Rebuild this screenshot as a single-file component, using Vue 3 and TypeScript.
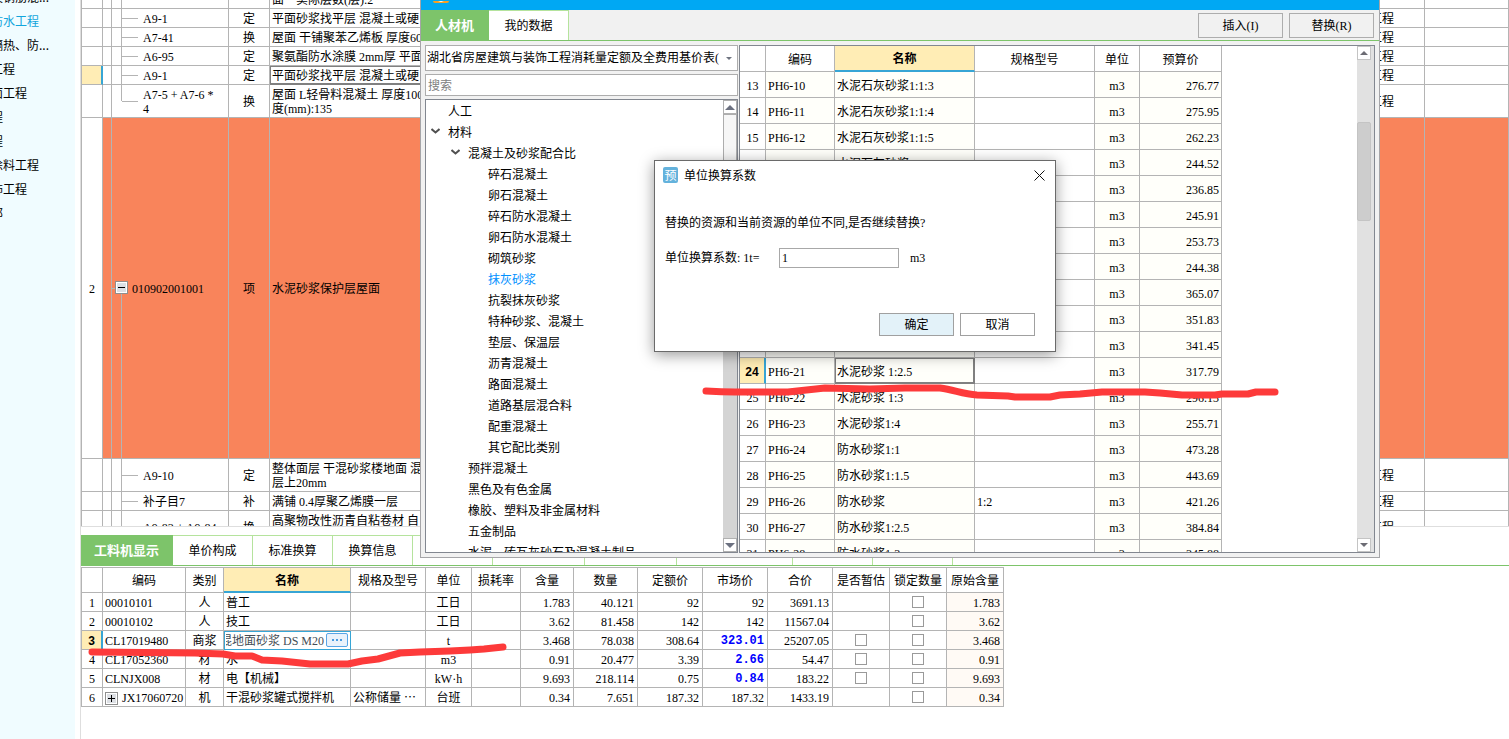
<script setup lang="ts">
import { ref } from 'vue'

interface NavItem { text: string; active?: boolean }
const navItems: NavItem[] = [
  { text: '混凝土及钢筋混...' },
  { text: '屋面及防水工程', active: true },
  { text: '保温、隔热、防...' },
  { text: '楼地面工程' },
  { text: '墙、柱面工程' },
  { text: '天棚工程' },
  { text: '门窗工程' },
  { text: '油漆、涂料工程' },
  { text: '其他装饰工程' },
  { text: '其他分部' },
]

interface QuotaRow {
  no?: string
  code: string[]
  kind: string
  name: string[]
  tall?: boolean
  item?: boolean
  last?: boolean
  selected?: boolean
}
const quotaRows: QuotaRow[] = [
  { code: [''], kind: '', name: ['\u00a0', '面\u3000实际层数(层):2'], tall: true },
  { code: ['A9-1'], kind: '定', name: ['平面砂浆找平层 混凝土或硬'] },
  { code: ['A7-41'], kind: '换', name: ['屋面 干铺聚苯乙烯板 厚度60'] },
  { code: ['A6-95'], kind: '定', name: ['聚氨酯防水涂膜 2mm厚 平面'] },
  { code: ['A9-1'], kind: '定', name: ['平面砂浆找平层 混凝土或硬'], selected: true },
  { code: ['A7-5 + A7-6 *', '4'], kind: '换', name: ['屋面 L轻骨料混凝土 厚度100', '度(mm):135'], tall: true, last: true },
  { no: '2', code: ['010902001001'], kind: '项', name: ['水泥砂浆保护层屋面'], item: true },
  { code: ['A9-10'], kind: '定', name: ['整体面层 干混砂浆楼地面 混', '层上20mm'], tall: true },
  { code: ['补子目7'], kind: '补', name: ['满铺 0.4厚聚乙烯膜一层'] },
  { code: ['A9-83 + A9-84'], kind: '换', name: ['高聚物改性沥青自粘卷材 自', '\u00a0'], tall: true },
]

const bottomTabs = [
  { text: '工料机显示', size: 'w92' },
  { text: '单价构成', size: 'w80' },
  { text: '标准换算', size: 'w80' },
  { text: '换算信息', size: 'w80' },
  { text: '', size: 'w80' },
  { text: '', size: 'w92' },
  { text: '', size: 'w92' },
  { text: '', size: 'w116' },
  { text: '', size: 'w80' },
  { text: '', size: 'w80' },
]
const activeTab = ref(0)

interface ResourceRow {
  code: string; kind: string; name: string; spec: string; unit: string
  amount: string; qty: string; quota: string; market: string; total: string
  estimate: boolean; changed?: boolean; editing?: boolean; group?: boolean
}
const resources: ResourceRow[] = [
  { code: '00010101', kind: '人', name: '普工', spec: '', unit: '工日', amount: '1.783', qty: '40.121', quota: '92', market: '92', total: '3691.13', estimate: false },
  { code: '00010102', kind: '人', name: '技工', spec: '', unit: '工日', amount: '3.62', qty: '81.458', quota: '142', market: '142', total: '11567.04', estimate: false },
  { code: 'CL17019480', kind: '商浆', name: '混地面砂浆 DS M20', spec: '', unit: 't', amount: '3.468', qty: '78.038', quota: '308.64', market: '323.01', total: '25207.05', estimate: true, changed: true, editing: true },
  { code: 'CL17052360', kind: '材', name: '水', spec: '', unit: 'm3', amount: '0.91', qty: '20.477', quota: '3.39', market: '2.66', total: '54.47', estimate: true, changed: true },
  { code: 'CLNJX008', kind: '材', name: '电【机械】', spec: '', unit: 'kW·h', amount: '9.693', qty: '218.114', quota: '0.75', market: '0.84', total: '183.22', estimate: true, changed: true },
  { code: 'JX17060720', kind: '机', name: '干混砂浆罐式搅拌机', spec: '公称储量 ⋯', unit: '台班', amount: '0.34', qty: '7.651', quota: '187.32', market: '187.32', total: '1433.19', estimate: false, group: true },
]
const editedName = ref('混地面砂浆 DS M20')

interface TreeItem { text: string; level: 1 | 2 | 3; open?: boolean; active?: boolean }
const tree: TreeItem[] = [
  { text: '人工', level: 1 },
  { text: '材料', level: 1, open: true },
  { text: '混凝土及砂浆配合比', level: 2, open: true },
  { text: '碎石混凝土', level: 3 },
  { text: '卵石混凝土', level: 3 },
  { text: '碎石防水混凝土', level: 3 },
  { text: '卵石防水混凝土', level: 3 },
  { text: '砌筑砂浆', level: 3 },
  { text: '抹灰砂浆', level: 3, active: true },
  { text: '抗裂抹灰砂浆', level: 3 },
  { text: '特种砂浆、混凝土', level: 3 },
  { text: '垫层、保温层', level: 3 },
  { text: '沥青混凝土', level: 3 },
  { text: '路面混凝土', level: 3 },
  { text: '道路基层混合料', level: 3 },
  { text: '配重混凝土', level: 3 },
  { text: '其它配比类别', level: 3 },
  { text: '预拌混凝土', level: 2 },
  { text: '黑色及有色金属', level: 2 },
  { text: '橡胶、塑料及非金属材料', level: 2 },
  { text: '五金制品', level: 2 },
  { text: '水泥、砖瓦灰砂石及混凝土制品', level: 2 },
]

interface PriceRow { no: number; code: string; name: string; spec: string; price: string }
const priceRows: PriceRow[] = [
  ['水泥石灰砂浆1:1:3', '', '276.77'],
  ['水泥石灰砂浆1:1:4', '', '275.95'],
  ['水泥石灰砂浆1:1:5', '', '262.23'],
  ['水泥石灰砂浆1:1:6', '', '244.52'],
  ['水泥石灰砂浆1:2:1', '', '236.85'],
  ['水泥石灰砂浆1:3:9', '', '245.91'],
  ['水泥石灰砂浆1:2:6', '', '253.73'],
  ['水泥石灰砂浆1:2:8', '', '244.38'],
  ['水泥砂浆 1:1', '', '365.07'],
  ['水泥砂浆 1:1.5', '', '351.83'],
  ['水泥砂浆 1:2', '', '341.45'],
  ['水泥砂浆 1:2.5', '', '317.79'],
  ['水泥砂浆 1:3', '', '296.13'],
  ['水泥砂浆1:4', '', '255.71'],
  ['防水砂浆1:1', '', '473.28'],
  ['防水砂浆1:1.5', '', '443.69'],
  ['防水砂浆', '1:2', '421.26'],
  ['防水砂浆1:2.5', '', '384.84'],
  ['防水砂浆1:3', '', '345.88'],
].map(([name, spec, price], i) => ({ no: 13 + i, code: `PH6-${10 + i}`, name, spec, price }))
const currentPrice = 24

const keyword = ref('')
const factor = ref('1')
</script>

<template>
  <div class="app">
    <nav class="side" aria-label="分部">
      <ul>
        <li v-for="item in navItems" :key="item.text">
          <a href="#" :class="{ active: item.active }">{{ item.text }}</a>
        </li>
      </ul>
    </nav>

    <main class="main">
      <section class="quota">
        <table class="grid quota-table">
          <colgroup>
            <col class="c-no"><col class="c-edge"><col class="c-code"><col class="c-kind"><col><col class="c-group"><col class="c-end">
          </colgroup>
          <tbody>
            <tr v-for="(row, i) in quotaRows" :key="i" :class="{ tall: row.tall, item: row.item, selected: row.selected, last: row.last }">
              <td class="no">{{ row.no }}</td>
              <td></td>
              <td class="code">
                <svg v-if="row.item" class="box minus" viewBox="0 0 13 13" aria-hidden="true">
                  <rect x="0.5" y="0.5" width="12" height="12" fill="#fff" stroke="#8f8f8f" />
                  <rect x="2" y="2" width="9" height="9" fill="#dcdfe4" />
                  <path d="M3 6.5h7" stroke="#000" />
                </svg>
                <div v-for="line in row.code" :key="line">{{ line }}</div>
              </td>
              <td class="mid">{{ row.kind }}</td>
              <td class="name"><div v-for="line in row.name" :key="line">{{ line }}</div></td>
              <td><template v-if="!row.item">工程</template></td>
              <td></td>
            </tr>
          </tbody>
        </table>
      </section>

      <section class="detail">
        <div class="tabs" role="tablist">
          <button
            v-for="(tab, i) in bottomTabs" :key="i" type="button" role="tab"
            :class="[tab.size, { on: activeTab === i }]" :aria-selected="activeTab === i" @click="activeTab = i"
          >{{ tab.text }}</button>
        </div>
        <table class="grid resource-table">
          <colgroup>
            <col class="r21"><col class="r83"><col class="r38"><col class="r127"><col class="r75"><col class="r46"><col class="r49"><col class="r53"><col class="r64"><col class="r65"><col class="r65"><col class="r65"><col class="r57"><col class="r57"><col class="r57">
          </colgroup>
          <thead>
            <tr>
              <th></th><th>编码</th><th>类别</th><th class="current">名称</th><th>规格及型号</th><th>单位</th><th>损耗率</th>
              <th>含量</th><th>数量</th><th>定额价</th><th>市场价</th><th>合价</th><th>是否暂估</th><th>锁定数量</th><th>原始含量</th>
            </tr>
          </thead>
          <tbody>
            <tr v-for="(r, i) in resources" :key="r.code" :class="{ selected: r.editing }">
              <td class="no">{{ i + 1 }}</td>
              <td>
                <span v-if="r.group" class="group">
                  <svg class="box" viewBox="0 0 13 13" aria-hidden="true">
                    <rect x="0.5" y="0.5" width="12" height="12" fill="#fff" stroke="#8f8f8f" />
                    <rect x="2" y="2" width="9" height="9" fill="#dcdfe4" />
                    <path d="M3 6.5h7M6.5 3v7" stroke="#000" />
                  </svg>{{ r.code }}
                </span>
                <template v-else>{{ r.code }}</template>
              </td>
              <td class="mid">{{ r.kind }}</td>
              <td v-if="r.editing" class="editor">
                <div>
                  <input v-model="editedName" type="text" aria-label="名称">
                  <button type="button" aria-label="选择">
                    <svg viewBox="0 0 12 2" aria-hidden="true"><path d="M1 0h2v2h-2zM5 0h2v2h-2zM9 0h2v2h-2z" fill="#4a9be0" /></svg>
                  </button>
                </div>
              </td>
              <td v-else>{{ r.name }}</td>
              <td>{{ r.spec }}</td>
              <td class="mid">{{ r.unit }}</td>
              <td></td>
              <td class="num">{{ r.amount }}</td>
              <td class="num">{{ r.qty }}</td>
              <td class="num">{{ r.quota }}</td>
              <td class="num" :class="{ changed: r.changed }">{{ r.market }}</td>
              <td class="num">{{ r.total }}</td>
              <td class="tick"><input v-if="r.estimate" type="checkbox" aria-label="是否暂估"></td>
              <td class="tick"><input type="checkbox" aria-label="锁定数量"></td>
              <td class="num origin">{{ r.amount }}</td>
            </tr>
          </tbody>
        </table>
      </section>
    </main>

    <section class="window">
      <header class="titlebar">
        <svg viewBox="0 0 16 3" aria-hidden="true"><path d="M0 0h16q0 2-2 2H2q-2 0-2-2z" fill="#f7a024" /><path d="M5 0h6l-3 1z" fill="#fff" /></svg>
      </header>
      <div class="window-tabs">
        <button type="button" class="on">人材机</button>
        <button type="button">我的数据</button>
        <span class="fill"></span>
        <button type="button" class="action">插入(I)</button>
        <button type="button" class="action">替换(R)</button>
      </div>
      <div class="window-body">
        <div class="left">
          <div class="combo">
            <select aria-label="定额库">
              <option>湖北省房屋建筑与装饰工程消耗量定额及全费用基价表(2018)</option>
            </select>
            <svg viewBox="0 0 6 3" aria-hidden="true"><path d="M0 0h6L3 3z" fill="#6f7480" /></svg>
          </div>
          <input v-model="keyword" class="search" type="text" placeholder="搜索" aria-label="搜索">
          <div class="tree">
            <ul>
              <li v-for="t in tree" :key="t.text" :class="['l' + t.level, { active: t.active }]">
                <span class="twig">
                  <svg v-if="t.open" viewBox="0 0 9 6" aria-hidden="true"><path d="M0.5 1l4 3.5 4-3.5" fill="none" stroke="#505050" stroke-width="2" /></svg>
                </span>
                <span>{{ t.text }}</span>
              </li>
            </ul>
            <div class="scroll tree-scroll">
              <span class="arrow"><svg viewBox="0 0 10 5" aria-hidden="true"><path d="M0 5h10L5 0z" fill="#6c7180" /></svg></span>
              <span class="thumb"></span>
              <span class="track"></span>
              <span class="arrow"><svg viewBox="0 0 10 5" aria-hidden="true"><path d="M0 0h10L5 5z" fill="#6c7180" /></svg></span>
            </div>
          </div>
        </div>

        <div class="prices">
          <div class="price-view">
            <table class="grid price-table">
              <colgroup>
                <col class="p26"><col class="p69"><col class="p140"><col class="p120"><col class="p45"><col class="p82">
              </colgroup>
              <thead>
                <tr><th></th><th>编码</th><th class="current">名称</th><th>规格型号</th><th>单位</th><th>预算价</th></tr>
              </thead>
              <tbody>
                <tr v-for="p in priceRows" :key="p.no" :class="{ selected: p.no === currentPrice }">
                  <td class="no">{{ p.no }}</td>
                  <td class="tint">{{ p.code }}</td>
                  <td class="tint name">{{ p.name }}</td>
                  <td>{{ p.spec }}</td>
                  <td class="tint mid">m3</td>
                  <td class="tint num">{{ p.price }}</td>
                </tr>
              </tbody>
            </table>
          </div>
          <div class="scroll price-scroll">
            <span class="arrow"><svg viewBox="0 0 8 4" aria-hidden="true"><path d="M0 4h8L4 0z" fill="#6c6c74" /></svg></span>
            <span class="lead"></span>
            <span class="thumb"></span>
            <span class="track"></span>
            <span class="arrow"><svg viewBox="0 0 8 4" aria-hidden="true"><path d="M0 0h8L4 4z" fill="#6c6c74" /></svg></span>
          </div>
        </div>
      </div>
    </section>

    <form class="dialog" role="dialog" aria-labelledby="dialog-title" @submit.prevent>
      <header>
        <span class="badge">预</span>
        <h2 id="dialog-title">单位换算系数</h2>
        <button type="button" class="close" aria-label="关闭">
          <svg viewBox="0 0 11 11" aria-hidden="true"><path d="M0.5 0.5l10 10M10.5 0.5l-10 10" stroke="#111" /></svg>
        </button>
      </header>
      <p>替换的资源和当前资源的单位不同,是否继续替换?</p>
      <div class="field">
        <label for="factor">单位换算系数: 1t=</label>
        <input id="factor" v-model="factor" type="text">
        <span>m3</span>
      </div>
      <footer>
        <button type="submit" class="ok">确定</button>
        <button type="button">取消</button>
      </footer>
    </form>

    <svg class="marks" viewBox="0 0 1509 739" aria-hidden="true">
      <path d="M706 391 Q722 392 735 392 L788 392 Q806 390 825 388 L870 389 L905 388 L940 388 C955 390 962 394 977 395 L1008 396 L1015 397 L1050 397 L1060 395 L1080 394 L1102 392 L1145 392 L1160 393 L1182 395 L1215 395 L1222 394 L1248 394 L1256 392 L1275 392" />
      <path d="M92 652 L195 653 L223 654 L235 656 L252 656 L262 660 L282 661 L310 664 L348 664 L362 661 L378 659 L400 653 L420 652 L450 651 L470 650 L484 649 L503 647" />
    </svg>
  </div>
</template>

<style>
body { margin: 0; }
</style>

<style scoped>
.app {
  position: relative;
  display: flex;
  height: 100vh;
  overflow: hidden;
  background: #fff;
  color: #000;
  font: 12px/14px "Liberation Serif", "Noto Sans CJK SC", serif;
}
.app *, .app *::before, .app *::after { box-sizing: border-box; }
button, input, select { font: inherit; color: inherit; margin: 0; padding: 0; border-radius: 0; }
ul { margin: 0; padding: 0; list-style: none; }

.side {
  flex: 0 0 75px;
  margin-right: 5px;
  overflow: hidden;
  background: #f0fcff;
  font-family: "Noto Sans CJK SC", sans-serif;
}
.side ul { margin: -15px 0 0 -45px; }
.side a { display: block; height: 24px; line-height: 24px; white-space: nowrap; color: #000; text-decoration: none; }
.side a.active { color: #12a5dc; }

.main { flex: 1; min-width: 0; display: flex; flex-direction: column; border-left: 1px solid #dedede; }
.quota { flex: 1; min-height: 0; overflow: hidden; border-bottom: 1px solid #dedede; }

.grid { border-collapse: separate; border-spacing: 0; table-layout: fixed; }
.grid th, .grid td {
  padding: 2px 2px 0;
  border-right: 1px solid #b4b4b4;
  border-bottom: 1px solid #b4b4b4;
  text-align: left;
  vertical-align: middle;
  font-weight: normal;
  white-space: nowrap;
  overflow: hidden;
}
.grid th { padding: 2px 0 0; text-align: center; }
.grid .mid { text-align: center; }
.grid .no { text-align: center; padding: 2px 0 0; }
.grid .num { text-align: right; }
.grid th.current { background: #ffedb5; border-bottom: 2px solid #37a5d5; font-weight: bold; }
.grid .selected .no { background: #ffedb5; border-right: 2px solid #37a5d5; }

.quota-table { width: 100%; margin-top: -24px; border-left: 1px solid #b4b4b4; }
.c-no { width: 21px; }
.c-edge { width: 9px; }
.c-code { width: 117px; }
.c-kind { width: 41px; }
.c-group { width: 57px; }
.c-end { width: 84px; }
.quota-table td { height: 19px; }
.quota-table .tall td { height: 33px; }
.quota-table .item td { height: 341px; background: #f9845b; }
.quota-table .item .no { background: #fff; }
.quota-table .name { white-space: pre; }
.quota-table .selected .name { box-shadow: inset 0 0 0 1px #808080; border-bottom-color: #808080; }
.quota-table .code { position: relative; padding-left: 31px; }
.quota-table .code::before { content: ""; position: absolute; left: 10px; top: 50%; width: 16px; height: 1px; background: #b4b4b4; }
.quota-table .code::after { content: ""; position: absolute; left: 9px; top: 0; width: 1px; height: 100%; background: #b4b4b4; }
.quota-table .last .code::after { height: 50%; }
.quota-table .item .code { padding-left: 20px; }
.quota-table .item .code::before { left: 0; width: 9px; }
.quota-table .item .code::after { top: 50%; height: 50%; }
.box { flex: none; width: 13px; height: 13px; }
.minus { position: absolute; z-index: 1; left: 3px; top: calc(50% - 7px); }

.detail { flex: 0 0 212px; padding-top: 8px; }
.tabs { display: flex; height: 31px; border-bottom: 1px solid #7dc46a; }
.tabs button { flex: none; border: 0; border-top: 1px solid #b5e39d; border-right: 1px solid #b5e39d; background: #fff; }
.tabs button.on { background: #7dc46a; border-color: #7dc46a; color: #fff; font-weight: bold; font-size: 13px; }
.w80 { width: 80px; }
.w92 { width: 92px; }
.w116 { width: 116px; }

.resource-table { width: 923px; margin-top: 1px; border-left: 1px solid #b4b4b4; border-top: 1px solid #b4b4b4; }
.resource-table th { height: 25px; }
.resource-table td { height: 19px; }
.resource-table .num { padding-right: 3px; }
.r21 { width: 21px; }
.r38 { width: 38px; }
.r46 { width: 46px; }
.r49 { width: 49px; }
.r53 { width: 53px; }
.r57 { width: 57px; }
.r64 { width: 64px; }
.r65 { width: 65px; }
.r75 { width: 75px; }
.r83 { width: 83px; }
.r127 { width: 127px; }
.group { display: flex; align-items: center; gap: 4px; }
.grid .changed { color: #00f; font-family: "Liberation Mono", monospace; font-weight: bold; }
.origin { background: #fffaf5; }
.resource-table .tick { padding: 0; }
.resource-table input[type="checkbox"] {
  appearance: none;
  display: block;
  width: 12px;
  height: 12px;
  margin: 0 auto;
  border: 1px solid #9a9a9a;
  background: #fff;
}
.resource-table .editor { padding: 0; border-color: #37a5d5; box-shadow: inset 1px 1px 0 #37a5d5; }
.editor div { display: flex; align-items: center; padding: 0 2px; }
.editor input { flex: 1; min-width: 0; height: 16px; border: 0; outline: 0; background: none; color: #444c55; text-indent: -6px; }
.editor button { display: flex; align-items: center; justify-content: center; width: 22px; height: 14px; border: 1px solid #5aa5e6; border-radius: 2px; background: #eaf2fb; }
.editor svg { width: 12px; height: 2px; }

.window {
  position: absolute;
  top: 0;
  left: 420px;
  right: 129px;
  bottom: 181px;
  display: flex;
  flex-direction: column;
  border: 1px solid #a5a5a8;
  border-top: 0;
  background: #f1f1f1;
}
.titlebar { flex: 0 0 10px; padding-left: 12px; background: #00a8f3; line-height: 0; }
.titlebar svg { width: 16px; height: 3px; }
.window-tabs { flex: 0 0 31px; display: flex; border-bottom: 1px solid #7dc46a; }
.window-tabs button { width: 80px; border: 1px solid #b5e39d; border-width: 1px 1px 0 0; background: #fff; }
.window-tabs .on { width: 68px; background: #7dc46a; border-color: #7dc46a; color: #fff; font-weight: bold; font-size: 13px; }
.fill { flex: 1; }
.window-tabs .action { width: 85px; height: 25px; margin: 3px 6px 0 0; border: 1px solid #adadad; background: #f1f1f1; }
.window-tabs .action:last-child { margin-right: 5px; }
.window-body { flex: 1; min-height: 0; display: flex; gap: 1px; padding: 4px; }

.left { flex: 0 0 313px; display: flex; flex-direction: column; min-height: 0; }
.combo { display: flex; align-items: center; height: 26px; margin-bottom: 3px; padding: 0 5px 0 1px; border: 1px solid #adadad; background: #fff; }
.combo select { flex: 1; width: 0; height: 24px; appearance: none; border: 0; background: none; overflow: hidden; }
.combo svg { width: 6px; height: 3px; margin-left: 7px; }
.search { height: 22px; margin-bottom: 3px; padding: 2px 2px 0; border: 1px solid #adadad; background: #fff; }
.search::placeholder { color: #808080; opacity: 1; }
.tree { flex: 1; min-height: 0; display: flex; overflow: hidden; border: 1px solid #828790; background: #fff; }
.tree ul { flex: 1; height: 100%; padding-top: 1px; overflow: hidden; }
.tree li { display: flex; align-items: center; height: 21px; white-space: nowrap; }
.tree .l1 { padding-left: 4px; }
.tree .l2 { padding-left: 24px; }
.tree .l3 { padding-left: 44px; }
.tree .active { color: #0090ff; }
.twig { flex: 0 0 18px; height: 10px; padding-left: 1px; line-height: 0; }
.twig svg { width: 9px; height: 6px; }

.scroll { display: flex; flex-direction: column; }
.scroll .track { flex: 1; }
.arrow { display: flex; align-items: center; justify-content: center; height: 14px; border: 1px solid #b0b0b0; background: #fff; }
.tree-scroll { flex: 0 0 14px; background: #d4d4d4; }
.tree-scroll svg { width: 10px; height: 5px; }
.tree-scroll .thumb { height: 200px; border: 1px solid #adadad; background: #f6f6f6; }

.prices { flex: 1; min-width: 0; display: flex; overflow: hidden; border: 1px solid #828790; background: #fff; }
.price-view { flex: 1; min-width: 0; height: 100%; overflow: hidden; }
.price-table { width: 482px; }
.price-table th { height: 26px; }
.price-table td { height: 26px; }
.price-table .tint { background: #fffffa; }
.price-table .selected .name { border-color: #808080; box-shadow: inset 0 0 0 1px #808080; }
.grid .selected .no { font-family: "Liberation Sans", sans-serif; font-weight: bold; }
.p26 { width: 26px; }
.p45 { width: 45px; }
.p69 { width: 69px; }
.p82 { width: 82px; }
.p120 { width: 120px; }
.p140 { width: 140px; }
.price-scroll { flex: 0 0 17px; padding-right: 3px; background: #e1e1e1; }
.price-scroll .arrow { border-color: #c4c4c4; }
.price-scroll svg { width: 8px; height: 4px; }
.price-scroll .lead { height: 62px; }
.price-scroll .thumb { height: 99px; border: 1px solid #c4c4c4; border-radius: 2px; background: #cdcdcd; }

.dialog {
  position: absolute;
  left: 654px;
  top: 160px;
  width: 402px;
  padding: 5px 10px 15px;
  border: 1px solid #6a6a6a;
  background: #fff;
  box-shadow: 0 3px 14px rgba(0, 0, 0, 0.4);
}
.dialog header { display: flex; align-items: center; height: 18px; margin-left: -2px; font-family: "Noto Sans CJK SC", sans-serif; }
.badge { width: 15px; height: 16px; border-radius: 2px; background: #64b2dc; color: #fff; line-height: 16px; text-align: center; }
.dialog h2 { flex: 1; margin: 0 0 0 6px; font-size: 12px; font-weight: normal; }
.close { width: 11px; height: 11px; border: 0; background: none; line-height: 0; }
.close svg { width: 11px; height: 11px; }
.dialog p { margin: 32px 0 18px; line-height: 14px; }
.field { display: flex; align-items: center; height: 20px; }
.field label { width: 114px; }
.field input { width: 120px; height: 20px; padding: 0 2px; border: 1px solid #a8a8a8; background: #fff; }
.field span { margin-left: 11px; }
.dialog footer { display: flex; justify-content: flex-end; gap: 6px; margin: 45px 10px 0 0; }
.dialog footer button { width: 75px; height: 23px; padding-top: 1px; border: 1px solid #a0a0a0; background: #fff; }
.dialog footer .ok { background: #e3f2f9; }

.marks { position: absolute; left: 0; top: 0; width: 1509px; height: 739px; pointer-events: none; }
.marks path { fill: none; stroke: #fd3a3a; stroke-width: 7; stroke-linecap: round; stroke-linejoin: round; }
</style>
